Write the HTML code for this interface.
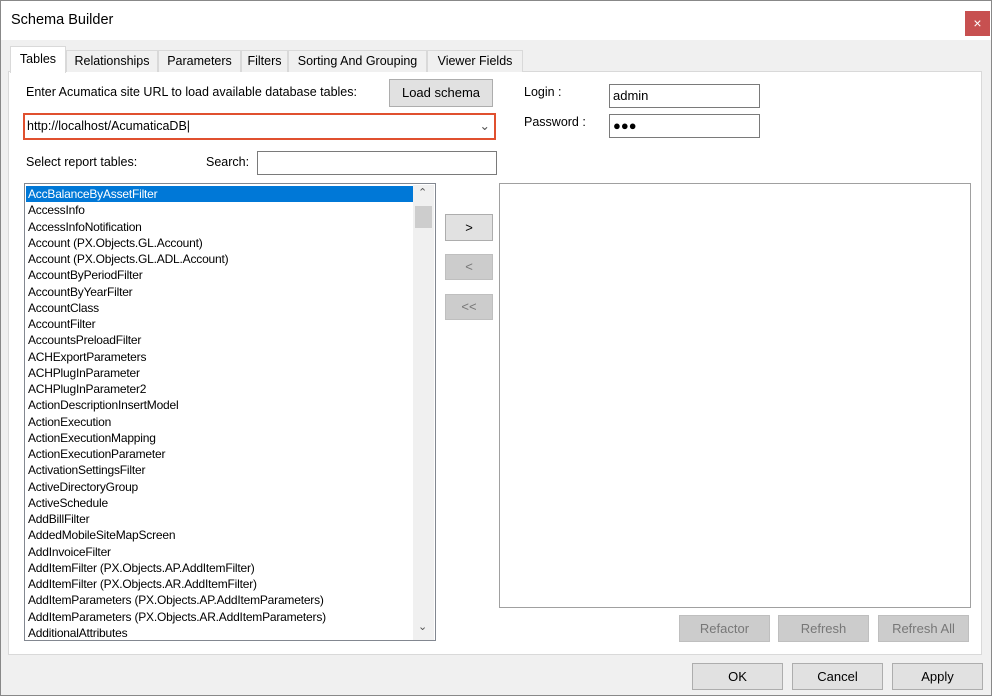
<!DOCTYPE html>
<html><head><style>
*{box-sizing:border-box;margin:0;padding:0}
body{width:992px;height:696px;background:#f0f0f0;font-family:"Liberation Sans",sans-serif;font-size:12px;color:#000;position:relative;overflow:hidden}
.a{position:absolute}
.btn{position:absolute;background:#e1e1e1;border:1px solid #adadad;text-align:center;font-size:13px}
.dis{background:#cccccc;border:1px solid #bfbfbf;color:#777}
.tab{position:absolute;top:50px;height:22px;border:1px solid #d9d9d9;border-bottom:none;background:#f0f0f0;font-size:12.5px;text-align:center;line-height:21px}
.inp{position:absolute;background:#fff;border:1px solid #7a7a7a}
.li{height:16.26px;line-height:16px;padding-left:2px;white-space:nowrap;letter-spacing:-0.2px}
</style></head><body>
<div class="a" style="left:0;top:0;width:992px;height:696px;border:1px solid #888;z-index:9;pointer-events:none"></div>
<div class="a" style="left:0;top:0;width:992px;height:40px;background:#fff"></div>
<div class="a" style="left:11px;top:12px;font-size:14.5px">Schema Builder</div>
<div class="a" style="left:965px;top:11px;width:25px;height:25px;background:#c75050;color:#fff;text-align:center;line-height:24px;font-size:14px">×</div>
<div class="a" style="left:8px;top:71px;width:974px;height:584px;background:#fff;border:1px solid #d9d9d9"></div>
<div class="tab" style="left:66px;width:92px">Relationships</div>
<div class="tab" style="left:158px;width:83px">Parameters</div>
<div class="tab" style="left:241px;width:47px">Filters</div>
<div class="tab" style="left:288px;width:139px">Sorting And Grouping</div>
<div class="tab" style="left:427px;width:96px">Viewer Fields</div>
<div class="tab" style="left:10px;top:46px;width:56px;height:27px;background:#fff;line-height:25px">Tables</div>
<div class="a" style="left:26px;top:85px;font-size:12.5px">Enter Acumatica site URL to load available database tables:</div>
<div class="btn" style="left:389px;top:79px;width:104px;height:28px;line-height:26px">Load schema</div>
<div class="inp" style="left:23px;top:113px;width:473px;height:27px;border:2px solid #e0502f;padding-left:2px;line-height:23px;font-size:12.5px">http://localhost/AcumaticaDB|<span style="position:absolute;right:4px;top:0;color:#555">&#8964;</span></div>
<div class="a" style="left:524px;top:85px;font-size:12.5px">Login :</div>
<div class="a" style="left:524px;top:115px;font-size:12.5px">Password :</div>
<div class="inp" style="left:609px;top:84px;width:151px;height:24px;padding-left:3px;line-height:22px;font-size:13px">admin</div>
<div class="inp" style="left:609px;top:114px;width:151px;height:24px;padding-left:3px;line-height:22px;font-size:13px">●●●</div>
<div class="a" style="left:26px;top:155px;font-size:12.5px">Select report tables:</div>
<div class="a" style="left:206px;top:155px;font-size:12.5px">Search:</div>
<div class="inp" style="left:257px;top:151px;width:240px;height:24px"></div>
<div class="a" style="left:24px;top:183px;width:412px;height:458px;background:#fff;border:1px solid #828790;overflow:hidden">
<div class="a" style="left:388px;top:1px;width:21px;height:455px;background:#f0f0f0"></div>
<div class="a" style="left:390px;top:22px;width:17px;height:22px;background:#cdcdcd"></div>
<div class="a" style="left:393px;top:2px;font-size:11px;color:#555">&#8963;</div>
<div class="a" style="left:393px;top:436px;font-size:11px;color:#555">&#8964;</div>
<div style="position:absolute;left:1px;top:2px;width:387px">
<div class="li" style="background:#0078d7;color:#fff">AccBalanceByAssetFilter</div>
<div class="li">AccessInfo</div><div class="li">AccessInfoNotification</div>
<div class="li">Account (PX.Objects.GL.Account)</div><div class="li">Account (PX.Objects.GL.ADL.Account)</div>
<div class="li">AccountByPeriodFilter</div><div class="li">AccountByYearFilter</div>
<div class="li">AccountClass</div><div class="li">AccountFilter</div><div class="li">AccountsPreloadFilter</div>
<div class="li">ACHExportParameters</div><div class="li">ACHPlugInParameter</div><div class="li">ACHPlugInParameter2</div>
<div class="li">ActionDescriptionInsertModel</div><div class="li">ActionExecution</div><div class="li">ActionExecutionMapping</div>
<div class="li">ActionExecutionParameter</div><div class="li">ActivationSettingsFilter</div><div class="li">ActiveDirectoryGroup</div>
<div class="li">ActiveSchedule</div><div class="li">AddBillFilter</div><div class="li">AddedMobileSiteMapScreen</div>
<div class="li">AddInvoiceFilter</div><div class="li">AddItemFilter (PX.Objects.AP.AddItemFilter)</div>
<div class="li">AddItemFilter (PX.Objects.AR.AddItemFilter)</div><div class="li">AddItemParameters (PX.Objects.AP.AddItemParameters)</div>
<div class="li">AddItemParameters (PX.Objects.AR.AddItemParameters)</div><div class="li">AdditionalAttributes</div>
</div></div>
<div class="btn" style="left:445px;top:214px;width:48px;height:27px;line-height:25px">&gt;</div>
<div class="btn dis" style="left:445px;top:254px;width:48px;height:26px;line-height:24px">&lt;</div>
<div class="btn dis" style="left:445px;top:294px;width:48px;height:26px;line-height:24px">&lt;&lt;</div>
<div class="a" style="left:499px;top:183px;width:472px;height:425px;background:#fff;border:1px solid #a0a0a0"></div>
<div class="btn dis" style="left:679px;top:615px;width:91px;height:27px;line-height:25px">Refactor</div>
<div class="btn dis" style="left:778px;top:615px;width:91px;height:27px;line-height:25px">Refresh</div>
<div class="btn dis" style="left:878px;top:615px;width:91px;height:27px;line-height:25px">Refresh All</div>
<div class="btn" style="left:692px;top:663px;width:91px;height:27px;line-height:25px">OK</div>
<div class="btn" style="left:792px;top:663px;width:91px;height:27px;line-height:25px">Cancel</div>
<div class="btn" style="left:892px;top:663px;width:91px;height:27px;line-height:25px">Apply</div>
</body></html>
